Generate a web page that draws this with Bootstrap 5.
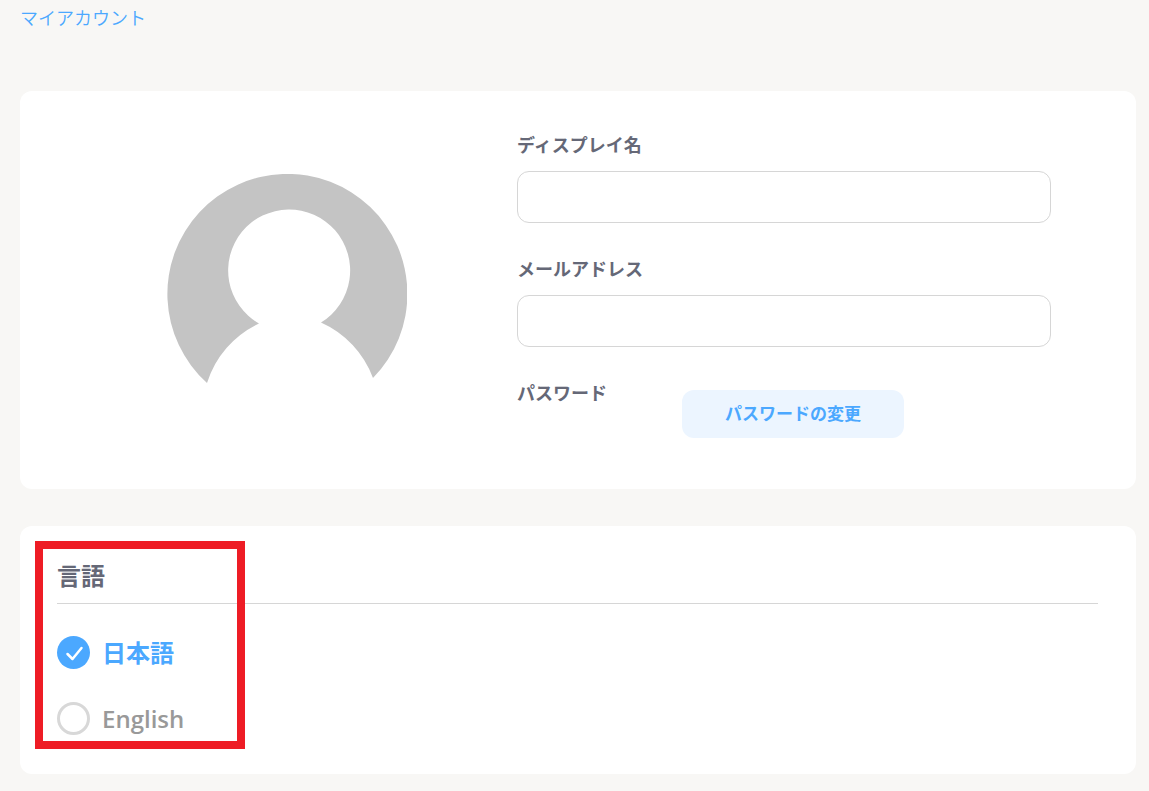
<!DOCTYPE html>
<html lang="ja">
<head>
<meta charset="utf-8">
<meta name="viewport" content="width=device-width, initial-scale=1">
<title>マイアカウント</title>
<link href="https://cdn.jsdelivr.net/npm/bootstrap@5.3.0/dist/css/bootstrap.min.css" rel="stylesheet">
<style>
  body { background: #f8f7f5; color: #656877; font-family: "Open Sans", "Noto Sans CJK JP", sans-serif; font-size: 18px; line-height: 28px; }
  .page { padding: 4px 13px 17px 20px; }
  .crumbs { margin-bottom: 59px; }
  .crumbs a { color: #4ba8ff; font-weight: 350; }
  .panel { border: 0; border-radius: 12px; }
  .profile { padding: 40px 38px 51px 37px; margin-bottom: 37px; }
  .avatar-col { flex: 0 0 44.2%; padding-top: 43px; }
  .form-col { padding-right: 47px; }
  .field { margin-bottom: 32px; }
  .form-label { margin-bottom: 12px; font-weight: 700; }
  .form-control { height: 52px; border-color: #d6d6d6; border-radius: 12px; }
  .pw-label { flex: 0 0 165px; font-weight: 700; }
  .btn-soft { width: 222px; height: 48px; margin-top: 11px; border: 0; border-radius: 12px; font-size: 17px; font-weight: 700;
    --bs-btn-bg: #ecf5ff; --bs-btn-color: #4ba8ff; --bs-btn-hover-bg: #dcecff; --bs-btn-hover-color: #4ba8ff; }
  .language { padding: 32px 38px 39px 37px; }
  .language h2 { margin-bottom: 32px; padding-bottom: 9px; border-bottom: 1px solid #d6d6d6; font-size: 24px; font-weight: 700; line-height: 36px; }
  .choices { row-gap: 33px; }
  .choice { color: #999; font-size: 24px; font-weight: 600; line-height: 33px; gap: 12px; }
  .choice .form-check-input { width: 33px; height: 33px; margin: 0; border: 3px solid #d8d8d8; flex: none; }
  .choice .form-check-input:checked { border: 0; background-color: #4ba8ff; background-size: 100%;
    background-image: url("data:image/svg+xml,%3Csvg xmlns='http://www.w3.org/2000/svg' viewBox='0 0 33 33'%3E%3Cpath d='M10.5 18l5 5 9-11' fill='none' stroke='white' stroke-width='2.5' stroke-linecap='round' stroke-linejoin='round'/%3E%3C/svg%3E"); }
  .choice:has(:checked) { color: #4ba8ff; font-weight: 700; }
  .callout-frame { top: 15px; left: 15px; width: 210px; height: 208px; border: 8px solid #ee1c25; }
</style>
</head>
<body>
<div class="page">
  <nav class="crumbs"><a class="text-decoration-none" href="#">マイアカウント</a></nav>
  <main>
    <section class="card panel profile flex-row">
      <div class="avatar-col text-center">
        <svg width="240" height="210" viewBox="0 0 240 210" role="img" aria-label="プロフィール画像">
          <path fill="#c4c4c4" d="M40 209A120 120 0 1 1 206 204A98 98 0 0 0 154 148.500A61 61 0 1 0 92 149.500A98 98 0 0 0 40 209Z"/>
        </svg>
      </div>
      <form class="form-col flex-fill">
        <div class="field">
          <label class="form-label d-block" for="name">ディスプレイ名</label>
          <input class="form-control" type="text" id="name">
        </div>
        <div class="field">
          <label class="form-label d-block" for="mail">メールアドレス</label>
          <input class="form-control" type="email" id="mail">
        </div>
        <div class="d-flex align-items-start">
          <span class="pw-label">パスワード</span>
          <button class="btn btn-soft" type="button">パスワードの変更</button>
        </div>
      </form>
    </section>
    <section class="card panel language">
      <h2>言語</h2>
      <div class="choices d-grid">
        <label class="choice d-flex align-items-center"><input class="form-check-input" type="radio" name="lang" checked>日本語</label>
        <label class="choice d-flex align-items-center"><input class="form-check-input" type="radio" name="lang">English</label>
      </div>
      <div class="callout-frame position-absolute pe-none"></div>
    </section>
  </main>
</div>
<script src="https://cdn.jsdelivr.net/npm/bootstrap@5.3.0/dist/js/bootstrap.bundle.min.js"></script>
</body>
</html>
